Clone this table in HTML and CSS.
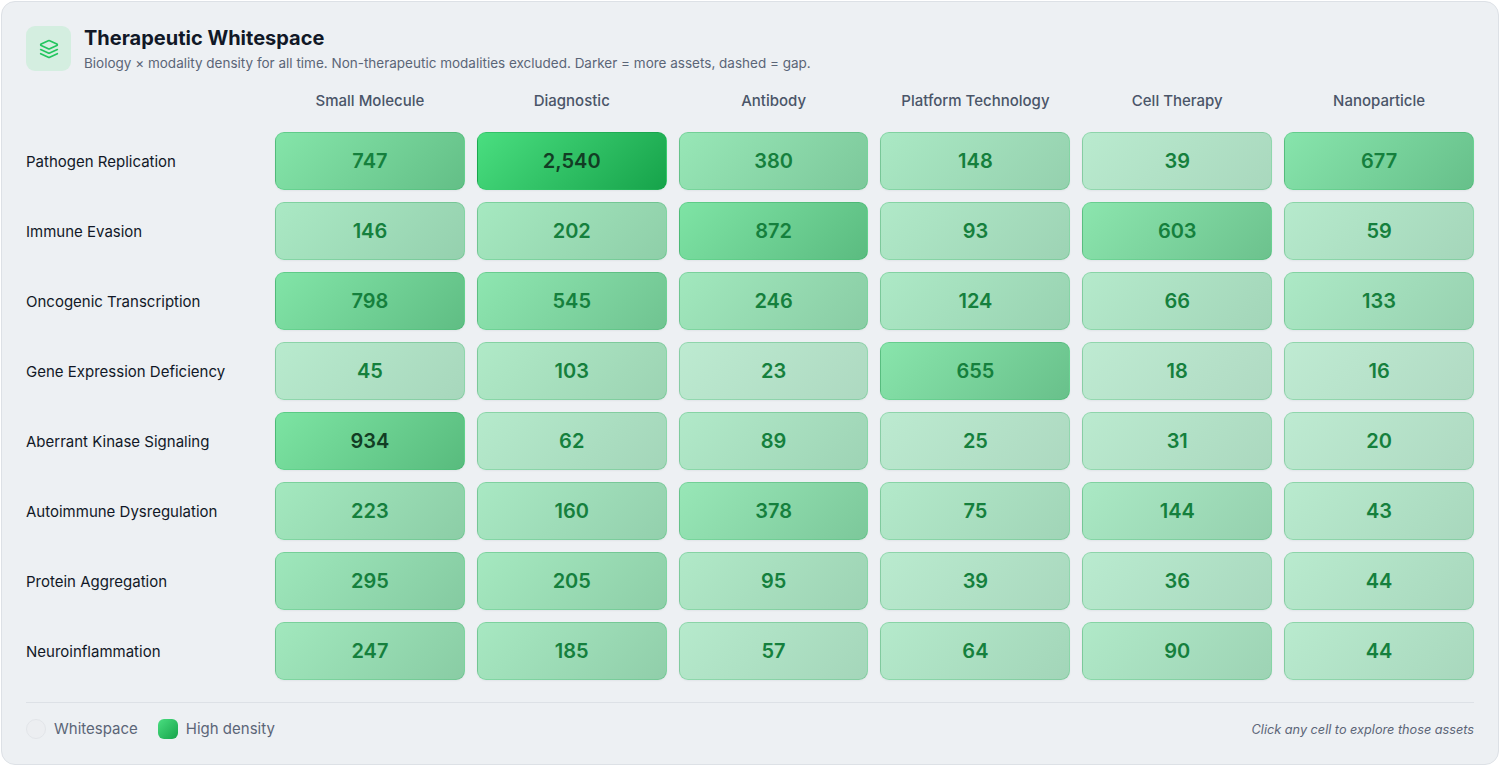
FILE: index.html
```html
<!DOCTYPE html>
<html lang="en">
<head>
<meta charset="utf-8">
<title>Therapeutic Whitespace</title>
<link rel="stylesheet" href="styles.css">
</head>
<body>
<div class="card">
  <div class="header">
    <div class="icon-box">
      <svg width="20" height="20" viewBox="0 0 24 24" fill="none" stroke="currentColor" stroke-width="2" stroke-linecap="round" stroke-linejoin="round">
        <path d="M12.83 2.18a2 2 0 0 0-1.66 0L2.6 6.08a1 1 0 0 0 0 1.83l8.58 3.91a2 2 0 0 0 1.66 0l8.58-3.9a1 1 0 0 0 0-1.83Z"/>
        <path d="M22 17.65l-9.17 4.16a2 2 0 0 1-1.66 0L2 17.65"/>
        <path d="M22 12.65l-9.17 4.16a2 2 0 0 1-1.66 0L2 12.65"/>
      </svg>
    </div>
    <div class="titles">
      <h1 class="title">Therapeutic Whitespace</h1>
      <p class="subtitle">Biology × modality density for all time. Non-therapeutic modalities excluded. Darker = more assets, dashed = gap.</p>
    </div>
  </div>

  <div class="grid">
    <div class="corner"></div>
    <div class="col-head">Small Molecule</div>
    <div class="col-head">Diagnostic</div>
    <div class="col-head">Antibody</div>
    <div class="col-head">Platform Technology</div>
    <div class="col-head">Cell Therapy</div>
    <div class="col-head">Nanoparticle</div>

    <div class="row-head">Pathogen Replication</div>
    <div class="cell" style="--a:0.643">747</div>
    <div class="cell dark" style="--a:1">2,540</div>
    <div class="cell" style="--a:0.522">380</div>
    <div class="cell" style="--a:0.408">148</div>
    <div class="cell" style="--a:0.317">39</div>
    <div class="cell" style="--a:0.623">677</div>

    <div class="row-head">Immune Evasion</div>
    <div class="cell" style="--a:0.407">146</div>
    <div class="cell" style="--a:0.440">202</div>
    <div class="cell" style="--a:0.677">872</div>
    <div class="cell" style="--a:0.369">93</div>
    <div class="cell" style="--a:0.600">603</div>
    <div class="cell" style="--a:0.339">59</div>

    <div class="row-head">Oncogenic Transcription</div>
    <div class="cell" style="--a:0.657">798</div>
    <div class="cell" style="--a:0.581">545</div>
    <div class="cell" style="--a:0.463">246</div>
    <div class="cell" style="--a:0.392">124</div>
    <div class="cell" style="--a:0.346">66</div>
    <div class="cell" style="--a:0.398">133</div>

    <div class="row-head">Gene Expression Deficiency</div>
    <div class="cell" style="--a:0.324">45</div>
    <div class="cell" style="--a:0.377">103</div>
    <div class="cell" style="--a:0.294">23</div>
    <div class="cell" style="--a:0.616">655</div>
    <div class="cell" style="--a:0.286">18</div>
    <div class="cell" style="--a:0.282">16</div>

    <div class="row-head">Aberrant Kinase Signaling</div>
    <div class="cell dark" style="--a:0.693">934</div>
    <div class="cell" style="--a:0.342">62</div>
    <div class="cell" style="--a:0.366">89</div>
    <div class="cell" style="--a:0.297">25</div>
    <div class="cell" style="--a:0.306">31</div>
    <div class="cell" style="--a:0.289">20</div>

    <div class="row-head">Autoimmune Dysregulation</div>
    <div class="cell" style="--a:0.451">223</div>
    <div class="cell" style="--a:0.416">160</div>
    <div class="cell" style="--a:0.521">378</div>
    <div class="cell" style="--a:0.354">75</div>
    <div class="cell" style="--a:0.406">144</div>
    <div class="cell" style="--a:0.321">43</div>

    <div class="row-head">Protein Aggregation</div>
    <div class="cell" style="--a:0.486">295</div>
    <div class="cell" style="--a:0.442">205</div>
    <div class="cell" style="--a:0.371">95</div>
    <div class="cell" style="--a:0.317">39</div>
    <div class="cell" style="--a:0.313">36</div>
    <div class="cell" style="--a:0.323">44</div>

    <div class="row-head">Neuroinflammation</div>
    <div class="cell" style="--a:0.463">247</div>
    <div class="cell" style="--a:0.431">185</div>
    <div class="cell" style="--a:0.337">57</div>
    <div class="cell" style="--a:0.344">64</div>
    <div class="cell" style="--a:0.367">90</div>
    <div class="cell" style="--a:0.323">44</div>
  </div>

  <div class="footer">
    <div class="legend">
      <span class="swatch swatch-empty"></span>
      <span class="legend-label">Whitespace</span>
      <span class="swatch swatch-full"></span>
      <span class="legend-label">High density</span>
    </div>
    <div class="hint">Click any cell to explore those assets</div>
  </div>
</div>
</body>
</html>
```

FILE: styles.css
```css
* { box-sizing: border-box; }

html, body {
  margin: 0;
  padding: 0;
  background: #ffffff;
}

body {
  padding: 1px;
  font-family: Inter, "Noto Sans", sans-serif;
  color: #1f2937;
}

.card {
  height: 764px;
  background: #edf0f3;
  border: 1px solid #dde1e6;
  border-radius: 14px;
  padding: 24px 24px 0;
}

.header {
  display: flex;
  align-items: flex-start;
  gap: 13px;
}

.icon-box {
  width: 45px;
  height: 45px;
  border-radius: 9px;
  background: #d4eee0;
  color: #22c55e;
  display: flex;
  align-items: center;
  justify-content: center;
  flex: none;
}

.titles { display: flex; flex-direction: column; }

.title {
  margin: 0;
  font-size: 20px;
  line-height: 24px;
  font-weight: 700;
  color: #111827;
}

.subtitle {
  margin: 3px 0 0;
  font-size: 13.5px;
  line-height: 20px;
  color: #5b6577;
}

.grid {
  margin-top: 18px;
  display: grid;
  grid-template-columns: 237px repeat(6, 1fr);
  grid-template-rows: 29px repeat(8, 58px);
  column-gap: 12px;
  row-gap: 12px;
}

.col-head {
  text-align: center;
  font-size: 15px;
  line-height: 20px;
  font-weight: 500;
  color: #4a5568;
}

.row-head {
  display: flex;
  align-items: center;
  font-size: 15px;
  font-weight: 400;
  color: #111827;
}

.cell {
  display: flex;
  align-items: center;
  justify-content: center;
  border-radius: 9px;
  font-size: 20px;
  font-weight: 600;
  color: #15803d;
  background: linear-gradient(135deg, rgba(74, 222, 128, var(--a)), rgba(22, 163, 74, var(--a)));
  border: 1px solid rgba(22, 163, 74, 0.25);
  box-shadow: 0 1px 2px rgba(15, 23, 42, 0.05);
}

.cell.dark { color: #123d24; }

.footer {
  margin-top: 22px;
  border-top: 1px solid #dde1e6;
  padding-top: 16px;
  display: flex;
  align-items: center;
  justify-content: space-between;
}

.legend {
  display: flex;
  align-items: center;
}

.swatch {
  width: 20px;
  height: 20px;
  border-radius: 6px;
  flex: none;
}

.swatch-empty {
  border-radius: 10px;
  background: #eceef1;
  border: 1px solid #e2e5e9;
}

.swatch-full {
  margin-left: 20px;
  background: linear-gradient(135deg, #4ade80, #16a34a);
}

.legend-label {
  margin-left: 8px;
  font-size: 15px;
  line-height: 20px;
  color: #5b6577;
}

.hint {
  font-size: 12.7px;
  font-style: italic;
  color: #5b6577;
}
```
